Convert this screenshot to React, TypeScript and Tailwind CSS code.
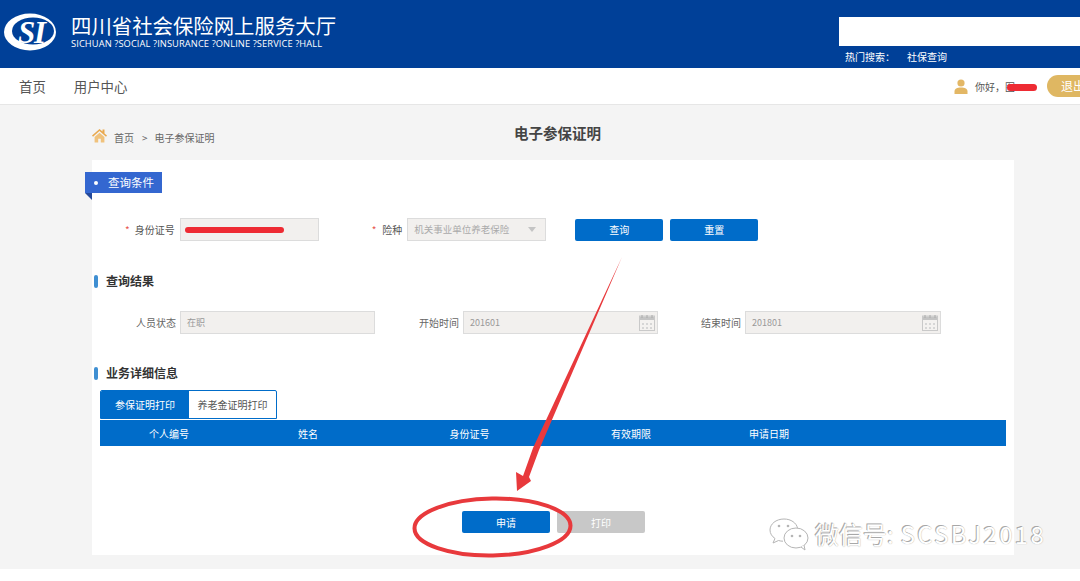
import React from 'react';

const cjk = '"Noto Sans CJK SC", "Noto Sans", sans-serif';

function Logo() {
  return (
    <svg width="54" height="40" viewBox="0 0 54 40" className="shrink-0">
      <ellipse cx="27" cy="20" rx="26" ry="18.5" fill="#fff" />
      <ellipse cx="30" cy="19" rx="21" ry="13.5" fill="#004098" />
      <text x="15" y="31" fill="#fff" fontFamily="'Liberation Serif', serif" fontWeight="700" fontStyle="italic" fontSize="31" textLength="28">SI</text>
    </svg>
  );
}

function CalendarIcon() {
  return (
    <svg width="16" height="16" viewBox="0 0 16 16" className="shrink-0">
      <rect x="0.5" y="1" width="15" height="14.5" fill="#f4f2f0" stroke="#c9c9c9" />
      <rect x="1" y="1.5" width="14" height="3.5" fill="#c4c4c4" />
      <path d="M3 0v3M8 0v3M13 0v3" stroke="#aaa" strokeWidth="1" />
      <path d="M3 8h2v2H3zM7 8h2v2H7zM11 8h2v2h-2zM3 12h2v2H3zM7 12h2v2H7zM11 12h2v2h-2z" fill="#d6d6d6" />
    </svg>
  );
}

function SectionTitle({ title, className }: { title: string; className: string }) {
  return (
    <div className={`flex items-center ${className}`}>
      <span className="ml-[2px] h-[13px] w-[4px] rounded-full bg-[#3f8fd2]" />
      <span className="ml-[8px] text-[12px] font-bold leading-[16px] text-[#333]">{title}</span>
    </div>
  );
}

function ReadField({ label, value, labelWidth, width, calendar }: { label: string; value: string; labelWidth: string; width: string; calendar?: boolean }) {
  return (
    <div className="flex items-center">
      <span className={`${labelWidth} pr-[4px] text-right text-[10px] text-[#666]`}>{label}</span>
      <div className={`${width} flex h-[23px] items-center justify-between border border-[#dcdcdc] bg-[#f2f0ee] pl-[6px] pr-[2px] text-[9px] text-[#999]`}>
        <span>{value}</span>
        {calendar && <CalendarIcon />}
      </div>
    </div>
  );
}

function BlueButton({ label, gray }: { label: string; gray?: boolean }) {
  return (
    <button className={`h-[22px] w-[88px] rounded-[2px] text-[10px] text-white ${gray ? 'bg-[#c8c8c8]' : 'bg-[#006cc9]'}`}>
      {label}
    </button>
  );
}

export default function App() {
  return (
    <div className="relative flex h-[581px] w-[1080px] flex-col overflow-hidden bg-[#f4f4f4]" style={{ fontFamily: cjk }}>
      {/* header */}
      <header className="flex h-[68px] shrink-0 bg-[#004098] text-white">
        <div className="ml-[3px] mt-[12px] h-[40px]">
          <Logo />
        </div>
        <div className="ml-[14px] mt-[11px]">
          <div className="text-[20.4px] leading-[28px] whitespace-nowrap">四川省社会保险网上服务大厅</div>
          <div className="text-[9.3px] leading-[10px] tracking-[0.1px] whitespace-nowrap" style={{ fontFamily: '"Open Sans", sans-serif' }}>SICHUAN ?SOCIAL ?INSURANCE ?ONLINE ?SERVICE ?HALL</div>
        </div>
        <div className="ml-auto mt-[17px] w-[241px]">
          <div className="h-[29px] bg-white" />
          <div className="ml-[6px] mt-[4px] flex text-[10px] leading-[14px]">
            <span className="w-[62px]">热门搜索：</span>
            <span>社保查询</span>
          </div>
        </div>
      </header>

      {/* nav */}
      <nav className="flex h-[37px] shrink-0 items-center border-b border-[#e6e6e6] bg-white text-[13.4px] text-[#555]">
        <span className="ml-[19px]">首页</span>
        <span className="ml-[28px]">用户中心</span>
        <div className="ml-auto flex items-center">
          <svg width="14" height="15" viewBox="0 0 14 15" className="shrink-0">
            <circle cx="7" cy="4" r="3.6" fill="#e3b765" />
            <path d="M0.5 15v-2.5C0.5 10 3 8.6 7 8.6s6.5 1.4 6.5 3.9V15z" fill="#e3b765" />
          </svg>
          <span className="relative ml-[7px] w-[72px] text-[10px] text-[#555]">
            你好，图
            <span className="absolute left-[32px] top-[5px] h-[7px] w-[30px] rounded-full bg-[#ee2b33]" />
          </span>
          <span className="flex h-[22px] w-[33px] items-center overflow-hidden rounded-l-full bg-[#dfb762] pl-[14px] text-[12px] whitespace-nowrap text-white">退出</span>
        </div>
      </nav>

      {/* breadcrumb + page title */}
      <div className="relative ml-[92px] mr-[66px] flex h-[55px] shrink-0 items-center pt-[9px]">
        <svg width="15" height="15" viewBox="0 0 15 15" className="mb-[3px] shrink-0">
          <path d="M7.5 1 0 7.6l1 1.1 6.5-5.6L14 8.7l1-1.1-2.5-2.2V1.6h-2v2z" fill="#e9a94f" />
          <path d="M2.6 9 7.5 4.7 12.4 9v5.4H8.8v-3.6H6.2v3.6H2.6z" fill="#f0c27c" />
        </svg>
        <span className="ml-[7px] text-[10px] text-[#666]">首页</span>
        <span className="ml-[8px] text-[10px] text-[#666]">&gt;</span>
        <span className="ml-[7px] text-[10px] text-[#666]">电子参保证明</span>
        <h1 className="absolute left-[422px] top-[17px] text-[14.5px] font-bold leading-[22px] text-[#444]">电子参保证明</h1>
      </div>

      {/* card */}
      <main className="ml-[92px] h-[395px] w-[922px] shrink-0 bg-white">
        <div className="-ml-[7px] mt-[12px] block w-[77px]">
          <div className="flex h-[21px] w-[77px] items-center bg-[#3467d0] text-[11.5px] text-white">
            <span className="ml-[9px] h-[4px] w-[4px] rounded-full bg-white" />
            <span className="ml-[10px]">查询条件</span>
          </div>
          <div className="h-0 w-0 border-l-[7px] border-t-[7px] border-l-transparent border-t-[#24499a]" />
        </div>

        <div className="ml-[33px] mt-[18px] flex items-center">
          <span className="text-[10px] text-[#e8554e]">*</span>
          <span className="ml-[5px] text-[10px] text-[#555]">身份证号</span>
          <div className="ml-[5px] flex h-[23px] w-[139px] items-center border border-[#dcdcdc] bg-[#f2f0ee] pl-[4px]">
            <span className="h-[6px] w-[99px] rounded-full bg-[#ee2b33]" />
          </div>
          <span className="ml-[53px] text-[10px] text-[#e8554e]">*</span>
          <span className="ml-[6px] text-[10px] text-[#555]">险种</span>
          <div className="ml-[5px] flex h-[23px] w-[139px] items-center justify-between border border-[#dcdcdc] bg-[#f2f0ee] pl-[6px] pr-[9px] text-[9.5px] text-[#aaa]">
            <span>机关事业单位养老保险</span>
            <span className="h-0 w-0 border-x-[4px] border-t-[5px] border-x-transparent border-t-[#c4c4c4]" />
          </div>
          <div className="ml-[29px] flex gap-[7px]">
            <BlueButton label="查询" />
            <BlueButton label="重置" />
          </div>
        </div>

        <SectionTitle title="查询结果" className="mt-[32px]" />

        <div className="mt-[22px] flex items-center">
          <ReadField label="人员状态" value="在职" labelWidth="w-[88px]" width="w-[195px]" />
          <ReadField label="开始时间" value="201601" labelWidth="w-[88px]" width="w-[195px]" calendar />
          <ReadField label="结束时间" value="201801" labelWidth="w-[87px]" width="w-[196px]" calendar />
        </div>

        <SectionTitle title="业务详细信息" className="mt-[31px]" />

        <div className="ml-[8px] mr-[8px] mt-[9px]">
          <div className="flex h-[29px] w-[177px] overflow-hidden rounded-t-[2px] border border-[#006cc9] text-[10px]">
            <span className="flex w-[88px] items-center justify-center bg-[#006cc9] text-white">参保证明打印</span>
            <span className="flex flex-1 items-center justify-center text-[#555]">养老金证明打印</span>
          </div>
          <div className="mt-px grid h-[26px] grid-cols-[138px_140px_183px_140px_1fr] items-center bg-[#006cc9] text-center text-[10px] text-white">
            <span>个人编号</span>
            <span>姓名</span>
            <span>身份证号</span>
            <span>有效期限</span>
            <span className="w-[136px]">申请日期</span>
          </div>
        </div>

        <div className="ml-[370px] mt-[65px] flex gap-[7px]">
          <BlueButton label="申请" />
          <BlueButton label="打印" gray />
        </div>
      </main>

      <div className="mt-[14px] flex-1 bg-white" />

      {/* red annotation drawn over the screenshot */}
      <svg width="1080" height="581" viewBox="0 0 1080 581" className="pointer-events-none absolute left-0 top-0">
        <path d="M622 257 539 450 529 477 531 481 517 491 516 472 523 476 533 448 Z" fill="#e8393c" />
        <ellipse cx="492.5" cy="527" rx="78" ry="28.500" fill="none" stroke="#e8393c" strokeWidth="4" transform="rotate(-1 492 527)" />
      </svg>

      {/* watermark */}
      <div className="absolute left-[767px] top-[515px] flex items-center text-white [text-shadow:-1px_-1px_0_#a8a8a8,0_0_1px_#999]">
        <svg width="44" height="38" viewBox="0 0 44 38" className="shrink-0">
          <path d="M17 4C9 4 3 9 3 15c0 3.5 2 6.5 5 8.500L6 28l5.500-2.500c1.500.5 3 .7 4.500.7" fill="#fff" stroke="#b5b5b5" strokeWidth="1" />
          <path d="M17 4c7 0 12.500 4 13.500 9" fill="none" stroke="#b5b5b5" strokeWidth="1" />
          <ellipse cx="29" cy="23" rx="12" ry="10" fill="#fff" stroke="#b5b5b5" strokeWidth="1" />
          <path d="M34 32l4 3-1-5" fill="#fff" stroke="#b5b5b5" strokeWidth="1" />
          <circle cx="12" cy="11" r="1.300" fill="#b5b5b5" />
          <circle cx="21" cy="11" r="1.300" fill="#b5b5b5" />
          <circle cx="25" cy="21" r="1.300" fill="#b5b5b5" />
          <circle cx="33" cy="21" r="1.300" fill="#b5b5b5" />
        </svg>
        <span className="ml-[4px] text-[24px] leading-[32px] whitespace-nowrap">微信号:<span className="ml-[7px] tracking-[2.3px]">SCSBJ2018</span></span>
      </div>
    </div>
  );
}
